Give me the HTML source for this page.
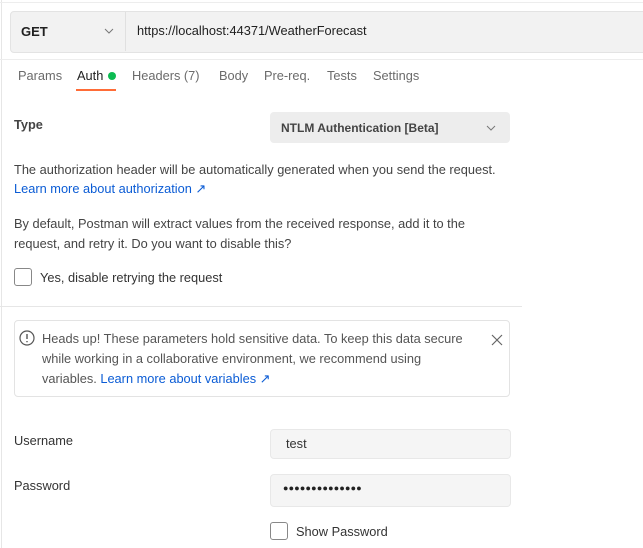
<html><head><style>
body{margin:0;width:643px;height:548px;background:#fff;font-family:"Liberation Sans",sans-serif;color:#212121;position:relative;overflow:hidden;font-size:12.8px}
.a{position:absolute}
.lnk{color:#0b5cd5}
</style></head><body>
<div class="a" style="left:1px;top:0;width:1px;height:548px;background:#e6e6e6"></div>
<div class="a" style="left:0;top:2px;width:643px;height:1px;background:#ededed"></div>
<div class="a" style="left:10px;top:11px;width:640px;height:40px;background:#f2f2f2;border:1px solid #e3e3e3;border-radius:4px"></div>
<div class="a" style="left:125px;top:12px;width:1px;height:39px;background:#e0e0e0"></div>
<div class="a" style="left:21px;top:24px;font-weight:bold;font-size:13px">GET</div>
<svg class="a" style="left:104px;top:27px" width="10" height="8"><path d="M1 2l4 4 4-4" stroke="#777" fill="none"/></svg>
<div class="a" style="left:137px;top:23px;font-size:12.8px">https://localhost:44371/WeatherForecast</div>
<div class="a" style="left:0;top:59px;width:643px;height:1px;background:#ededed"></div>
<div class="a" style="left:18px;top:68px;color:#6b6b6b">Params</div>
<div class="a" style="left:77px;top:68px;color:#212121">Auth</div>
<div class="a" style="left:108px;top:72px;width:8px;height:8px;border-radius:50%;background:#0cbb52"></div>
<div class="a" style="left:76px;top:89px;width:40px;height:2px;background:#ff6c37"></div>
<div class="a" style="left:132px;top:68px;color:#6b6b6b">Headers (7)</div>
<div class="a" style="left:219px;top:68px;color:#6b6b6b">Body</div>
<div class="a" style="left:264px;top:68px;color:#6b6b6b">Pre-req.</div>
<div class="a" style="left:327px;top:68px;color:#6b6b6b">Tests</div>
<div class="a" style="left:373px;top:68px;color:#6b6b6b">Settings</div>
<div class="a" style="left:14px;top:117px;font-weight:bold;color:#444">Type</div>
<div class="a" style="left:270px;top:112px;width:240px;height:31px;background:#ededed;border-radius:4px"></div>
<div class="a" style="left:281px;top:121px;font-weight:bold;font-size:12px;color:#444">NTLM Authentication [Beta]</div>
<svg class="a" style="left:486px;top:124px" width="10" height="8"><path d="M1 2l4 4 4-4" stroke="#777" fill="none"/></svg>
<div class="a" style="left:14px;top:162px;color:#444">The authorization header will be automatically generated when you send the request.</div>
<div class="a lnk" style="left:14px;top:181px">Learn more about authorization ↗</div>
<div class="a" style="left:14px;top:214px;color:#444;line-height:20px;width:490px">By default, Postman will extract values from the received response, add it to the request, and retry it. Do you want to disable this?</div>
<div class="a" style="left:14px;top:268px;width:16px;height:16px;border:1px solid #888;border-radius:3px"></div>
<div class="a" style="left:40px;top:270px;color:#333">Yes, disable retrying the request</div>
<div class="a" style="left:0;top:306px;width:522px;height:1px;background:#e6e6e6"></div>
<div class="a" style="left:14px;top:320px;width:494px;height:75px;border:1px solid #e3e3e3;border-radius:4px"></div>
<svg class="a" style="left:19px;top:330px" width="16" height="16"><circle cx="8" cy="8" r="7" stroke="#555" fill="none" stroke-width="1.2"/><path d="M8 4v5M8 11v1.3" stroke="#555" stroke-width="1.4"/></svg>
<div class="a" style="left:42px;top:329px;color:#555;line-height:20px;width:425px">Heads up! These parameters hold sensitive data. To keep this data secure while working in a collaborative environment, we recommend using variables. <span class="lnk">Learn more about variables ↗</span></div>
<svg class="a" style="left:491px;top:334px" width="12" height="12"><path d="M1 1l10 10M11 1L1 11" stroke="#666" stroke-width="1.2"/></svg>
<div class="a" style="left:14px;top:433px;color:#333">Username</div>
<div class="a" style="left:270px;top:429px;width:239px;height:28px;background:#f5f5f5;border:1px solid #e8e8e8;border-radius:4px"></div>
<div class="a" style="left:286px;top:436px;color:#333">test</div>
<div class="a" style="left:14px;top:478px;color:#333">Password</div>
<div class="a" style="left:270px;top:474px;width:239px;height:31px;background:#f5f5f5;border:1px solid #e8e8e8;border-radius:4px"></div>
<div class="a" style="left:283px;top:483px;color:#222;font-size:9px;letter-spacing:0.2px">●●●●●●●●●●●●●●</div>
<div class="a" style="left:270px;top:522px;width:16px;height:16px;border:1px solid #888;border-radius:3px"></div>
<div class="a" style="left:296px;top:524px;color:#333">Show Password</div>
</body></html>
